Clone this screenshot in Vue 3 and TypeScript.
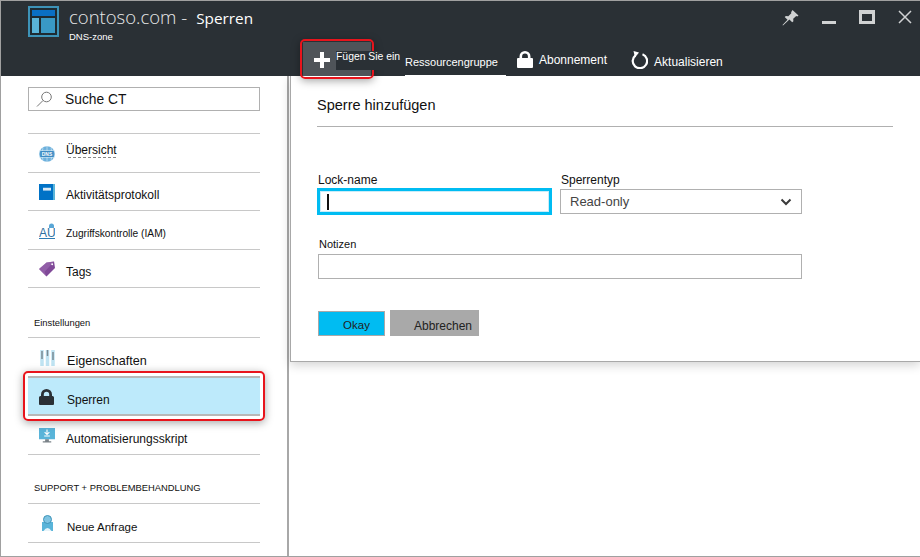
<script setup lang="ts">
interface NavItem {
  label: string
  icon: string
  size?: number
  offset?: boolean
  ghost?: boolean
  active?: boolean
}

const general: NavItem[] = [
  { label: 'Übersicht', icon: 'dns', ghost: true },
  { label: 'Aktivitätsprotokoll', icon: 'book' },
  { label: 'Zugriffskontrolle (IAM)', icon: 'iam', size: 10.2 },
  { label: 'Tags', icon: 'tag' }
]

const settings: NavItem[] = [
  { label: 'Eigenschaften', icon: 'sliders', size: 12.6, offset: true },
  { label: 'Sperren', icon: 'lock', offset: true, active: true },
  { label: 'Automatisierungsskript', icon: 'monitor' }
]

const support: NavItem[] = [{ label: 'Neue Anfrage', icon: 'support', size: 11.5, offset: true }]

const groups = [
  { title: '', items: general },
  { title: 'Einstellungen', items: settings },
  { title: 'SUPPORT + PROBLEMBEHANDLUNG', items: support }
]
</script>

<template>
  <div class="blade">
    <header class="top">
      <div class="brand">
        <svg class="brand__logo" width="31" height="31" viewBox="0 0 31 31">
          <rect width="31" height="31" fill="#3d93b8" />
          <rect x="2" y="2" width="27" height="27" fill="#1e2b33" />
          <rect x="4" y="4" width="23" height="6" fill="#0a6fc4" />
          <rect x="4" y="12" width="7" height="15" fill="#59b4d9" />
          <rect x="13" y="12" width="14" height="15" fill="#3999c6" />
        </svg>
        <div>
          <div class="brand__title">
            <span class="brand__name">contoso.com -</span>
            <span class="brand__page">Sperren</span>
          </div>
          <div class="brand__sub">DNS-zone</div>
        </div>
      </div>

      <div class="tools">
        <div class="tool tool--add">
          <svg width="18" height="18" viewBox="0 0 18 18"><path d="M7 1h4v6h6v4h-6v6H7v-6H1V7h6z" fill="#fff" /></svg>
          <span class="tool__add-label">Fügen Sie ein</span>
        </div>
        <div class="tool tool--group">Ressourcengruppe</div>
        <div class="tool tool--sub">
          <svg width="16" height="17" viewBox="0 0 16 17">
            <path d="M2.500 8V5.500a5.500 5.500 0 0 1 11 0V8h-2.600V5.500a2.900 2.900 0 0 0-5.800 0V8z" fill="#fff" />
            <rect y="7" width="16" height="10" rx="1" fill="#fff" />
          </svg>
          <span>Abonnement</span>
        </div>
        <div class="tool tool--refresh">
          <svg width="18" height="18" viewBox="0 0 18 18">
            <path d="M5.500 4.300A7.200 7.200 0 1 0 12.500 3.300" fill="none" stroke="#fff" stroke-width="2.200" />
            <path d="M3.500 0l5.500 1.500L5 6.500z" fill="#fff" />
          </svg>
          <span>Aktualisieren</span>
        </div>
      </div>

      <div class="win">
        <svg width="17" height="16" viewBox="0 0 17 16">
          <path d="M10.500 0l6 5.500-1.200.9-1.100-.4-3 2.800.2 2.400-1.200 1.100-2.800-2.800L1 15.500l-.5-.5 5-5.200-2.800-2.700 1.200-1.100 2.400.2 3-2.900-.2-1.100z" fill="#d0d2d3" />
        </svg>
        <svg class="win__min" width="14" height="3" viewBox="0 0 14 3"><rect width="14" height="3" fill="#d0d2d3" /></svg>
        <svg width="16" height="14" viewBox="0 0 16 14">
          <path d="M0 0h16v14H0zM3 4v7h10V4z" fill="#d0d2d3" fill-rule="evenodd" />
        </svg>
        <svg width="14" height="14" viewBox="0 0 14 14">
          <path d="M1 1l12 12M13 1L1 13" stroke="#d0d2d3" stroke-width="1.500" />
        </svg>
      </div>
    </header>

    <main class="body">
      <aside class="side">
        <div class="search">
          <svg width="17" height="17" viewBox="0 0 17 17" fill="none" stroke="#777" stroke-width="1">
            <circle cx="10.500" cy="6" r="4.800" />
            <path d="M7 9.500L1 15.500" />
          </svg>
          <span>Suche CT</span>
        </div>

        <section v-for="group in groups" :key="group.title" class="group">
          <h2 v-if="group.title" class="group__title">{{ group.title }}</h2>
          <ul class="list">
            <li
              v-for="item in group.items"
              :key="item.label"
              class="row"
              :class="{ 'row--active': item.active }"
            >
              <span class="row__icon">
                <svg v-if="item.icon === 'dns'" width="16" height="16" viewBox="0 0 18 18">
                  <circle cx="9" cy="9" r="8.800" fill="#6cb0dc" />
                  <path d="M0 5h18M0 13h18M9 0v18M4.500 2q-3 7 0 14M13.500 2q3 7 0 14" stroke="#d6eaf6" stroke-width=".7" fill="none" />
                  <rect x="1.500" y="5.500" width="15" height="7" rx="1" fill="#3f8cc4" />
                  <text x="9" y="11" font-size="5.500" font-weight="700" fill="#fff" text-anchor="middle" font-family="Liberation Sans, sans-serif">DNS</text>
                </svg>
                <svg v-else-if="item.icon === 'book'" width="16" height="16" viewBox="0 0 16 17" preserveAspectRatio="none">
                  <rect width="16" height="17" fill="#0072c6" />
                  <rect x="14" width="2" height="17" fill="#59b4d9" />
                  <rect x="4" y="4" width="8" height="3" fill="#dbeaf5" />
                </svg>
                <svg v-else-if="item.icon === 'iam'" width="16" height="16" viewBox="0 0 16 16">
                  <path d="M10 5V3a2.500 2.500 0 0 1 5 0v2z" fill="#59a6d6" />
                  <rect y="15" width="16" height="1" fill="#2e7cb3" />
                  <text x="0" y="13.500" font-size="12" fill="#2e6f9f" font-family="Liberation Sans, sans-serif">AU</text>
                </svg>
                <svg v-else-if="item.icon === 'tag'" width="16" height="16" viewBox="0 0 17 16">
                  <path d="M0 8L8 1l8-1 1 7-9 9z" fill="#804998" />
                  <path d="M0 8L8 1l8-1L6 11l2 5z" fill="#a678ba" opacity=".45" />
                  <circle cx="14" cy="3" r="1" fill="#fff" />
                </svg>
                <svg v-else-if="item.icon === 'sliders'" class="row__svg--nudge" width="15" height="16" viewBox="0 0 15 16">
                  <path d="M2 0v16M7.500 0v16M13 0v16" stroke="#bfe3f2" stroke-width="3.500" />
                  <path d="M2 1v8M7.500 0v6M13 2v8" stroke="#7a8a94" stroke-width="1.500" />
                </svg>
                <svg v-else-if="item.icon === 'lock'" width="15" height="16" viewBox="0 0 15 16">
                  <path d="M2 8V5.500a5.500 5.500 0 0 1 11 0V8h-2.800V5.500a2.700 2.700 0 0 0-5.400 0V8z" fill="#2a3035" />
                  <path d="M0 8.500A1.500 1.500 0 0 1 1.500 7h12A1.500 1.500 0 0 1 15 8.500V15a1 1 0 0 1-1 1H1a1 1 0 0 1-1-1z" fill="#2a3035" />
                </svg>
                <svg v-else-if="item.icon === 'monitor'" class="row__svg--lift" width="16" height="15" viewBox="0 0 17 16" preserveAspectRatio="none">
                  <rect width="17" height="12" fill="#59b4d9" />
                  <path d="M8.500 1.500v5M6 4.500l2.500 2.500L11 4.500M5.500 8.500h6" stroke="#fff" stroke-width="1.200" fill="none" />
                  <path d="M6.500 12h4v2h-4zM4 14h9v1.500H4z" fill="#7a8288" />
                </svg>
                <svg v-else class="row__svg--support" width="11" height="16" viewBox="0 0 11 16">
                  <rect y="7" width="11" height="9" fill="#59b4d9" />
                  <circle cx="5.500" cy="4.500" r="4" fill="#7fc4e2" stroke="#3d93b8" />
                  <path d="M1.500 16q4-6 8 0z" fill="#e6f4fa" />
                </svg>
              </span>
              <span
                class="row__label"
                :class="{ 'row__label--offset': item.offset, 'row__label--ghost': item.ghost }"
                :style="item.size ? { fontSize: item.size + 'px' } : undefined"
              >{{ item.label }}</span>
            </li>
          </ul>
        </section>
      </aside>

      <section class="panel">
        <h1 class="panel__title">Sperre hinzufügen</h1>
        <form class="form" @submit.prevent>
          <div class="form__row">
            <label class="field field--name">
              <span class="field__label">Lock-name</span>
              <span class="input input--focus"><i class="caret"></i></span>
            </label>
            <label class="field field--type">
              <span class="field__label">Sperrentyp</span>
              <span class="input input--select">
                Read-only
                <svg width="12" height="8" viewBox="0 0 12 8"><path d="M1.500 1.500L6 6l4.500-4.500" fill="none" stroke="#3a3a3a" stroke-width="2" /></svg>
              </span>
            </label>
          </div>
          <label class="field field--notes">
            <span class="field__label">Notizen</span>
            <span class="input"></span>
          </label>
          <div class="actions">
            <button class="btn btn--ok" type="button">Okay</button>
            <button class="btn btn--cancel" type="button">Abbrechen</button>
          </div>
        </form>
      </section>
    </main>

    <div class="callout callout--add"></div>
    <div class="callout callout--lock"></div>
  </div>
</template>

<style>
html,
body {
  margin: 0;
  background: #fff;
}
</style>

<style scoped>
.blade {
  position: relative;
  width: 920px;
  height: 557px;
  box-sizing: border-box;
  overflow: hidden;
  display: flex;
  flex-direction: column;
  border-top: 1px solid #a0a0a0;
  border-left: 1px solid #a0a0a0;
  border-bottom: 1px solid #a0a0a0;
  background: #fff;
  color: #111;
  font-family: 'Liberation Sans', Arial, sans-serif;
  font-size: 12px;
}

.top {
  flex: none;
  height: 75px;
  display: flex;
  background: #2a3035;
  color: #fff;
  position: relative;
}

.brand {
  width: 299px;
  flex: none;
  display: flex;
  gap: 10px;
  padding: 5px 0 0 27px;
  box-sizing: border-box;
}

.brand__title {
  display: flex;
  align-items: baseline;
  gap: 9px;
  margin-top: -1px;
  line-height: 24px;
}

.brand__name {
  font-family: 'Open Sans', sans-serif;
  font-weight: 300;
  font-size: 18.500px;
  color: #e8e9ea;
}

.brand__page {
  font-family: 'Open Sans', sans-serif;
  font-size: 15.300px;
}

.brand__sub {
  font-size: 9.500px;
  line-height: 12px;
  margin-top: 1px;
}

.tools {
  flex: none;
  height: 100%;
  display: flex;
  align-items: flex-end;
}

.tool {
  display: flex;
  box-sizing: border-box;
  white-space: nowrap;
}

.tool--add {
  position: relative;
  z-index: 1;
  width: 68px;
  height: 34px;
  margin-left: 3px;
  background: #4f5459;
  align-items: center;
  padding: 2px 0 0 10px;
}

.tool__add-label {
  position: absolute;
  left: 33px;
  top: 9px;
  background: #2a3035;
  font-size: 10.400px;
  line-height: 12px;
  height: 19px;
}

.tool--group {
  margin-left: 34px;
  width: 101px;
  height: 22px;
  border-bottom: 1px solid #fff;
  font-size: 11px;
  line-height: 13px;
  padding-top: 2px;
}

.tool--sub,
.tool--refresh {
  height: 25px;
  font-size: 12px;
  line-height: 14px;
  align-items: flex-start;
  gap: 6px;
}

.tool--sub {
  margin-left: 11px;
}

.tool--sub span {
  margin-top: 2px;
}

.tool--refresh {
  margin-left: 23px;
}

.tool--refresh span {
  margin-top: 4px;
}

.win {
  flex: 1;
  display: flex;
  align-items: flex-start;
  justify-content: flex-end;
  padding: 9px 8px 0 0;
  gap: 23px;
}

.win__min {
  margin-top: 11px;
}

.body {
  flex: 1;
  display: flex;
  min-height: 0;
}

.side {
  flex: none;
  width: 288px;
  box-sizing: border-box;
  border-right: 2px solid #a8a8a8;
  padding: 11px 27px 0 27px;
  overflow: hidden;
}

.search {
  height: 24px;
  box-sizing: border-box;
  border: 1px solid #b0b0b0;
  display: flex;
  align-items: center;
  gap: 12px;
  padding-left: 7px;
  font-size: 13.800px;
  margin-bottom: 22px;
}

.group__title {
  margin: 0;
  font-size: 9.400px;
  font-weight: 400;
  line-height: 14px;
  padding: 28px 0 7px 6px;
}

.group:last-child .group__title {
  padding: 26px 0 8px 6px;
}

.list {
  list-style: none;
  margin: 0;
  padding: 0;
  border-top: 1px solid #c8c8c8;
}

.row {
  height: 38.500px;
  box-sizing: border-box;
  border-bottom: 1px solid #c8c8c8;
  display: flex;
  align-items: center;
  padding-left: 11px;
}

.group + .group .row {
  height: 39px;
}

.group + .group .row--active {
  height: 40px;
  margin-top: -1px;
  background: #bdeafb;
  border-top: 2px solid #b8b8b8;
  border-bottom: 2px solid #b8b8b8;
}

.row__icon {
  width: 27px;
  flex: none;
  display: flex;
  margin-top: 2px;
}

.row__svg--nudge {
  margin-left: 1px;
}

.row__svg--lift {
  margin-top: -2px;
}

.row__svg--support {
  margin: -2px 0 0 3px;
}

.row__label {
  position: relative;
  padding-top: 7px;
  font-size: 12px;
}

.row__label--offset {
  margin-left: 1px;
}

.row__label--ghost {
  padding-top: 0;
  margin-bottom: 6px;
}

.row__label--ghost::after {
  content: '';
  position: absolute;
  left: 2px;
  right: 0;
  bottom: -1px;
  height: 1px;
  background: repeating-linear-gradient(90deg, #888 0 3px, transparent 3px 5px);
}

.panel {
  flex: none;
  width: 630px;
  height: 286px;
  box-sizing: border-box;
  margin-left: 1px;
  padding: 19px 27px 0 26px;
  border-left: 1px solid #a8a8a8;
  border-bottom: 1px solid #a8a8a8;
  box-shadow: 0 3px 10px rgba(0, 0, 0, 0.18);
  background: #fff;
}

.panel__title {
  margin: 0;
  height: 32px;
  padding-top: 1px;
  box-sizing: border-box;
  border-bottom: 1px solid #b0b0b0;
  font-size: 14.500px;
  font-weight: 400;
  line-height: 18px;
}

.form {
  padding-left: 1px;
}

.form__row {
  display: flex;
  gap: 8px;
  margin-top: 46px;
}

.field {
  display: block;
}

.field--name {
  width: 235px;
  margin-left: -1px;
}

.field--type {
  width: 242px;
}

.field--notes {
  width: 484px;
  margin-top: 22px;
}

.field__label {
  display: block;
  font-size: 12px;
  line-height: 14px;
  margin-bottom: 2px;
  padding-left: 1px;
}

.field--notes .field__label {
  font-size: 11px;
  margin-bottom: 3px;
}

.input {
  display: flex;
  height: 25px;
  box-sizing: border-box;
  border: 1px solid #b0b0b0;
  align-items: center;
}

.input--focus {
  height: 27px;
  border: 3px solid #00bcf2;
  box-shadow: inset 0 0 0 1px #c9ecf8;
  margin-top: -1px;
  padding-left: 7px;
}

.caret {
  width: 1.500px;
  height: 16px;
  background: #111;
}

.input--select {
  justify-content: space-between;
  padding: 0 9px 0 9px;
  font-size: 13px;
  color: #444;
}

.actions {
  display: flex;
  align-items: flex-end;
  gap: 5px;
  margin-top: 31px;
}

.btn {
  padding: 0;
  font: inherit;
  font-size: 12px;
  color: #222;
}

.btn--ok {
  width: 67px;
  height: 25px;
  border: 1px solid #a8a8a8;
  background: #00bcf2;
  padding: 2px 0 0 10px;
  font-size: 11.500px;
}

.btn--cancel {
  width: 89px;
  height: 26px;
  border: none;
  background: #a9a9a9;
  padding: 5px 0 0 17px;
}

.callout {
  position: absolute;
  box-sizing: border-box;
  border: 2px solid #e8141c;
  border-radius: 5px;
  box-shadow: 0 2px 8px rgba(0, 0, 0, 0.35);
  pointer-events: none;
}

.callout--add {
  left: 299px;
  top: 38px;
  width: 74px;
  height: 40px;
}

.callout--lock {
  left: 22px;
  top: 370px;
  width: 242px;
  height: 50px;
}
</style>
